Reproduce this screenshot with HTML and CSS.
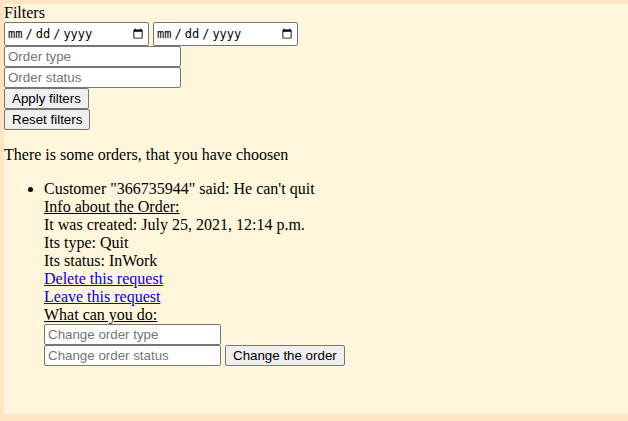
FILE: index.html
```html
<!DOCTYPE html>
<html>
<head>
<meta charset="utf-8">
<link rel="stylesheet" href="styles.css">
</head>
<body>
<form class="filters">
Filters<br>
<input class="date" type="date"> <input class="date" type="date"><br>
<input class="text" type="text" placeholder="Order type"><br>
<input class="text" type="text" placeholder="Order status"><br>
<button class="btn" type="button">Apply filters</button><br>
<button class="btn" type="button">Reset filters</button>
</form>
<p class="intro">There is some orders, that you have choosen</p>
<ul class="orders">
<li>Customer "366735944" said: He can't quit<br>
<u>Info about the Order:</u><br>
It was created: July 25, 2021, 12:14 p.m.<br>
Its type: Quit<br>
Its status: InWork<br>
<a href="#">Delete this request</a><br>
<a href="#">Leave this request</a><br>
<u>What can you do:</u><br>
<form class="change">
<input class="text" type="text" placeholder="Change order type"><br>
<input class="text" type="text" placeholder="Change order status"> <button class="btn" type="button">Change the order</button>
</form>
</li>
</ul>
</body>
</html>
```
FILE: styles.css
```css
html {
  background: #ffe4c4;
  height: 421px;
  overflow: hidden;
}
body {
  margin: 4px 0 0 4px;
  min-height: 410px;
  background: #fff6dc;
  font-family: "Liberation Serif", "Times New Roman", serif;
  font-size: 16px;
  color: #000;
}
.filters, .change {
  margin: 0;
}
input, button {
  font-family: "Liberation Sans", Arial, sans-serif;
  font-size: 13.3333px;
  box-sizing: border-box;
  margin: 0;
  vertical-align: bottom;
}
.date {
  width: 145px;
  height: 24px;
  border: 1px solid #767676;
  border-radius: 2px;
  background: #fff;
  padding: 1px 2px;
  font-family: "DejaVu Sans Mono", "Liberation Mono", monospace;
  font-size: 12px;
}
.date::-webkit-datetime-edit-text {
  padding: 0 2px;
}
.text {
  width: 177px;
  height: 21px;
  border: 1px solid #767676;
  border-radius: 2px;
  background: #fff;
  padding: 1px 3px;
}
.text::placeholder {
  color: #757575;
}
.btn {
  height: 21px;
  padding: 1px 7px;
  border: 1px solid #767676;
  border-radius: 2px;
  background: #efefef;
  color: #000;
}
.intro {
  margin: 16px 0;
}
.orders {
  margin: 16px 0;
  padding-left: 40px;
}
a {
  color: #0000ee;
}
```
